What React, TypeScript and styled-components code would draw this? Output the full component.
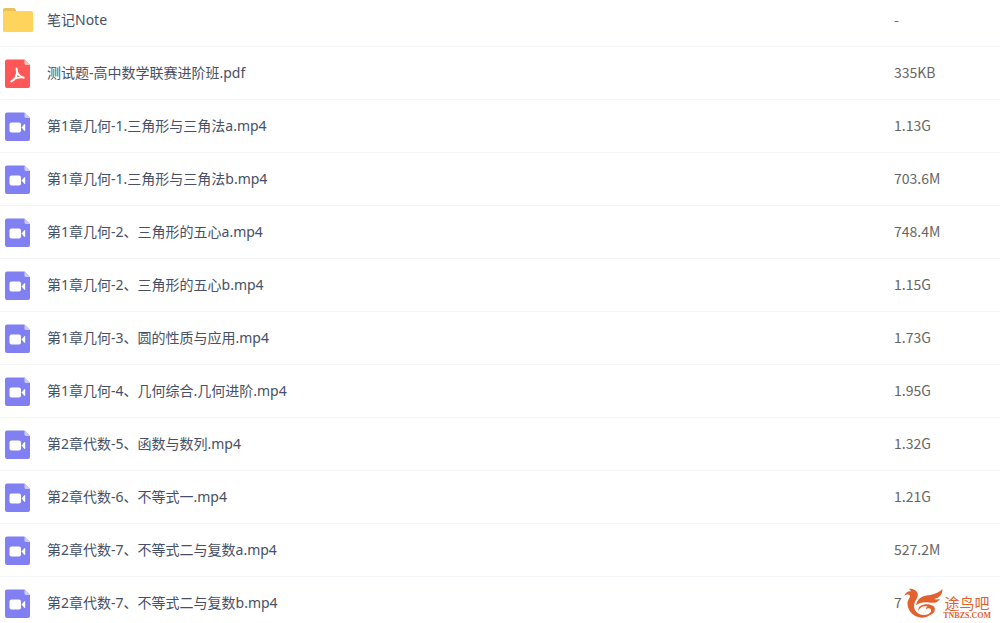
import React from "react";
import styled, { createGlobalStyle } from "styled-components";

const GlobalStyle = createGlobalStyle`
  * { box-sizing: border-box; }
  body {
    margin: 0;
    background: #fff;
    font-family: "Noto Sans", "Noto Sans CJK SC", sans-serif;
  }
`;

type Kind = "folder" | "pdf" | "video";
interface Entry {
  kind: Kind;
  name: string;
  size: string;
}

const entries: Entry[] = [
  { kind: "folder", name: "笔记Note", size: "-" },
  { kind: "pdf", name: "测试题-高中数学联赛进阶班.pdf", size: "335KB" },
  { kind: "video", name: "第1章几何-1.三角形与三角法a.mp4", size: "1.13G" },
  { kind: "video", name: "第1章几何-1.三角形与三角法b.mp4", size: "703.6M" },
  { kind: "video", name: "第1章几何-2、三角形的五心a.mp4", size: "748.4M" },
  { kind: "video", name: "第1章几何-2、三角形的五心b.mp4", size: "1.15G" },
  { kind: "video", name: "第1章几何-3、圆的性质与应用.mp4", size: "1.73G" },
  { kind: "video", name: "第1章几何-4、几何综合.几何进阶.mp4", size: "1.95G" },
  { kind: "video", name: "第2章代数-5、函数与数列.mp4", size: "1.32G" },
  { kind: "video", name: "第2章代数-6、不等式一.mp4", size: "1.21G" },
  { kind: "video", name: "第2章代数-7、不等式二与复数a.mp4", size: "527.2M" },
  { kind: "video", name: "第2章代数-7、不等式二与复数b.mp4", size: "7" },
];

/* The list is scrolled slightly, so the first row is partly out of view. */
const Page = styled.main`
  position: relative;
  display: flow-root;
  height: 100vh;
  overflow: hidden;
`;

const FileTable = styled.table`
  width: 100%;
  margin-top: -6px;
  border-collapse: separate;
  border-spacing: 0;
  table-layout: fixed;
`;

const Cell = styled.td`
  height: 53px;
  padding: 0;
  border-bottom: 1px solid #f3f5f8;
  vertical-align: middle;
  white-space: nowrap;
`;

const NameCell = styled(Cell)`
  padding-left: 2px;
`;

const SizeCell = styled(Cell)`
  width: 106px;
  padding-bottom: 3px;
  color: #666;
  font-family: "Noto Sans CJK SC", sans-serif;
  font-size: 14px;
  line-height: 20px;
`;

const FileLink = styled.a`
  display: flex;
  align-items: center;
  gap: 13px;
  color: #465066;
  font-size: 14px;
  line-height: 20px;
  text-decoration: none;
`;

const Icon = styled.svg`
  display: block;
  flex: none;
  width: 32px;
  height: 32px;
`;

const Watermark = styled.div`
  position: absolute;
  right: 9px;
  bottom: 3px;
  display: flex;
  align-items: flex-end;
  background: #fff;
  color: #e2622f;
`;

const Bird = styled.svg`
  display: block;
  width: 40px;
  height: 32px;
`;

const Brand = styled.div`
  display: flex;
  flex-direction: column;
  align-items: center;
`;

const BrandName = styled.span`
  font-size: 15px;
  line-height: 15px;
`;

const BrandSite = styled.span`
  font-family: "Liberation Serif", serif;
  font-size: 8px;
  font-weight: 700;
  line-height: 9px;
`;

function FileIcon({ kind }: { kind: Kind }) {
  if (kind === "folder") {
    return (
      <Icon viewBox="0 0 32 32" aria-hidden="true">
        <path d="M1 6a2 2 0 0 1 2-2h9.500l2 3H29v9H1z" fill="#e9c05a" />
        <rect x="1" y="7" width="30" height="21" rx="1.500" fill="#ffd45c" />
      </Icon>
    );
  }
  const pdf = kind === "pdf";
  return (
    <Icon viewBox="0 0 32 32" aria-hidden="true">
      <path
        d="M5 2.500h17.500l5.500 5.500v21a2 2 0 0 1-2 2H5a2 2 0 0 1-2-2v-24.500a2 2 0 0 1 2-2z"
        fill={pdf ? "#ff5757" : "#8080f2"}
      />
      <path d="M22.500 2.500l5.500 5.500h-4a1.500 1.500 0 0 1-1.500-1.500z" fill={pdf ? "#ffc0c0" : "#ccccfb"} />
      {pdf ? (
        <path
          d="M14.600 11.500q1.300 5-1.100 9.300-1.800 2.800-4.300 3.700M14.700 14q1.600 5 7.100 6.800M11.800 22.300q4.200-2.400 9.800-1.800"
          fill="none"
          stroke="#fff"
          strokeWidth="1.900"
          strokeLinecap="round"
          strokeLinejoin="round"
        />
      ) : (
        <>
          <rect x="7.500" y="12.500" width="11.500" height="10" rx="2" fill="#fff" />
          <path d="M19.500 17.500l2.800-3.300q.9-.7.900.5v5.600q0 1.200-.9.500z" fill="#fff" />
        </>
      )}
    </Icon>
  );
}

export default function App() {
  return (
    <Page>
      <GlobalStyle />
      <FileTable>
        <tbody>
          {entries.map((entry) => (
            <tr key={entry.name}>
              <NameCell>
                <FileLink href="#">
                  <FileIcon kind={entry.kind} />
                  {entry.name}
                </FileLink>
              </NameCell>
              <SizeCell>{entry.size}</SizeCell>
            </tr>
          ))}
        </tbody>
      </FileTable>
      <Watermark>
        <Bird viewBox="0 0 40 32" aria-hidden="true" fill="currentColor">
          <path d="M1 8C2.500 4.500 5 3 8 3.300L6 .8C10.500.3 15 3 14.800 7 14.600 11 11 13.500 11 18c.2 4.500 3 7.500 7.500 8.800 4 1 8-.5 10-3C27.500 28 22.500 30.500 17 29.500 9.500 28.300 4.500 22 4.500 15.500 4.500 11.500 7 10 7 8 6.500 6 3.500 6 1 8z" />
          <path d="M13 17.500C14 11 18 8 25 7.200 31 6.600 35.500 5 39.300 1 40 6 36.500 10 31 11c2 .7 4 .5 6-.3C34.500 15 31 15.200 26 14.500c-5.500-.5-10 .2-13 3z" />
          <path d="M15.500 23C14.500 18.500 19 16.300 23.500 16.300c5.500 0 9 2.200 8.300 5.700-.7 3.800-5.300 6.500-10 5.500 4-.5 6.700-2.800 6.200-5.500-.5-2.300-3.500-2.300-5-.8 0-1.400.6-2 1.500-2.600C20.500 17.600 16.500 19 15.500 23z" />
        </Bird>
        <Brand>
          <BrandName>途鸟吧</BrandName>
          <BrandSite>TNBZS.COM</BrandSite>
        </Brand>
      </Watermark>
    </Page>
  );
}
